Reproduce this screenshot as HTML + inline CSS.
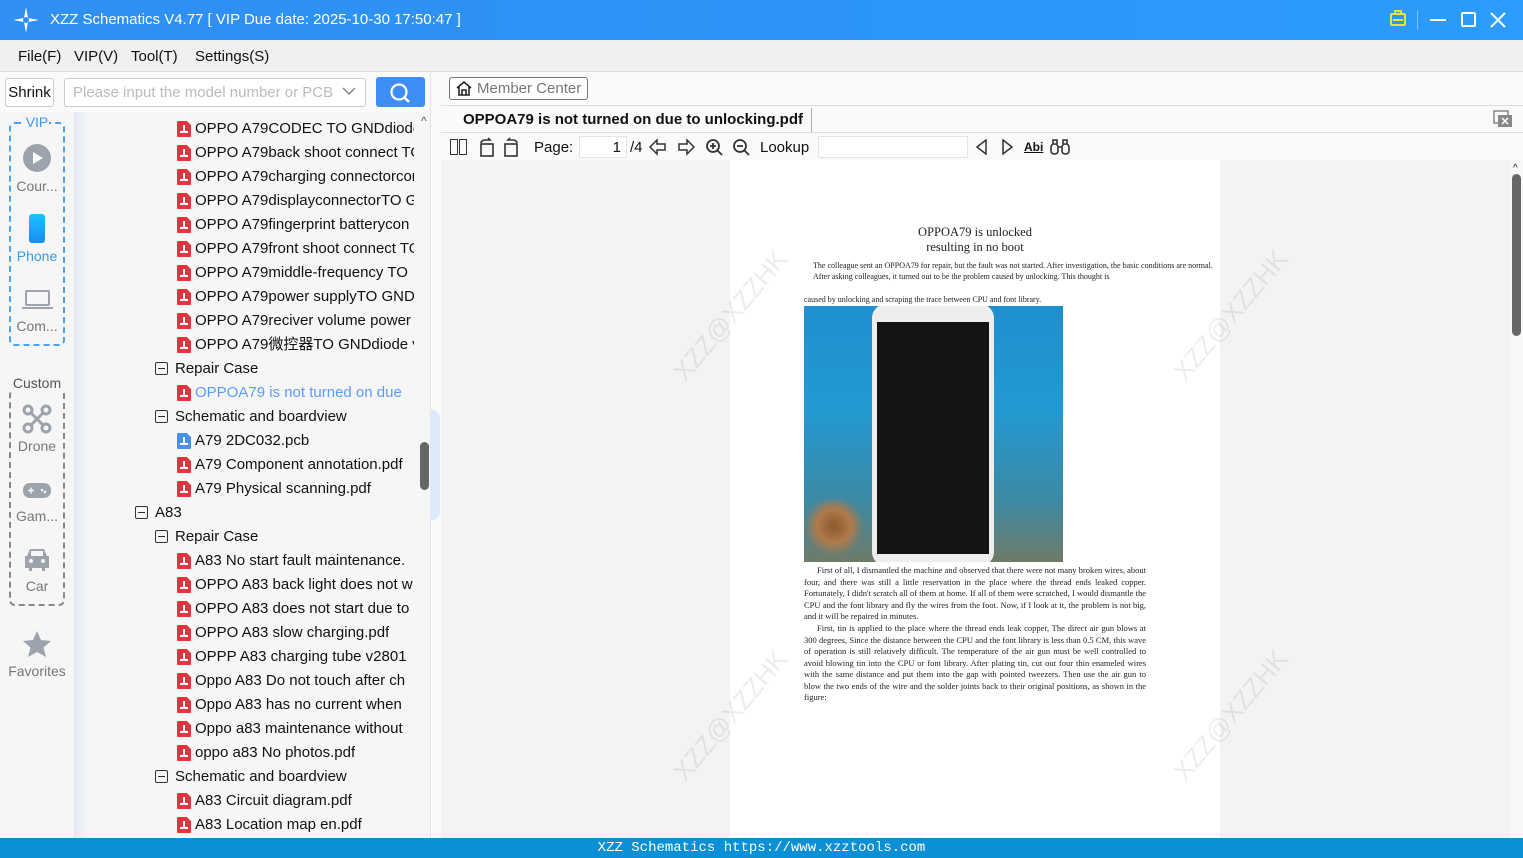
<!DOCTYPE html>
<html><head><meta charset="utf-8"><style>
*{margin:0;padding:0;box-sizing:border-box}
body{width:1523px;height:858px;overflow:hidden;position:relative;font-family:"Liberation Sans","Noto Sans CJK SC",sans-serif;background:#f0f0f0;color:#111}
.a{position:absolute}
.title{left:0;top:0;width:1523px;height:40px;background:linear-gradient(90deg,#2f8ff2,#2c95f8 60%,#2b9cfb);color:#fff;font-size:15px}
.menu{left:0;top:40px;width:1523px;height:32px;background:#f0f0f0;border-bottom:1px solid #ddd;font-size:15px}
.menu span{position:absolute;top:8px}
.tree{left:74px;top:112px;width:356px;height:726px;background:linear-gradient(90deg,#e3e9f2,#f6f6f6 14px,#f6f6f6)}
.row{position:absolute;font-size:15px;white-space:nowrap;height:22px;line-height:22px;overflow:hidden}
.pdf{position:absolute;width:14px;height:16px;background:#d9363e;border-radius:1px;clip-path:polygon(0 0,70% 0,100% 25%,100% 100%,0 100%)}
.pdf:before{content:"";position:absolute;left:6px;top:4px;width:2px;height:7px;background:#fff}
.pdf:after{content:"";position:absolute;left:3px;top:10px;width:8px;height:2px;background:#fff}
.box{position:absolute;width:13px;height:13px;border:1px solid #333;border-radius:2px}
.box:after{content:"";position:absolute;left:2px;top:5px;width:7px;height:1px;background:#333}
.side{font-size:14px;color:#777;text-align:center;width:74px;left:0}
.pdfarea{left:441px;top:160px;width:1069px;height:678px;background:#f3f3f3}
.page{left:730px;top:160px;width:490px;height:678px;background:#fff;font-family:"Liberation Serif",serif;color:#222}
.p{position:absolute;font-size:8.5px;line-height:11.5px;text-align:justify;left:74px;width:342px}
.wm{position:absolute;color:rgba(0,0,0,0.07);font-size:26px;transform:rotate(-50deg);white-space:nowrap}
</style></head><body>
<div class="a title">
<svg class="a" style="left:12px;top:6px" width="28" height="28" viewBox="0 0 28 28"><path d="M14 1 L16 12 L27 14 L16 16 L14 27 L12 16 L1 14 L12 12Z" fill="#fff"/><circle cx="14" cy="14" r="3" fill="#2f8ff2"/></svg>
<span class="a" style="left:50px;top:11px">XZZ Schematics V4.77 [ VIP Due date: 2025-10-30 17:50:47 ]</span>
<div class="a" style="left:1390px;top:13px;width:16px;height:13px;border:2px solid #e4e43a;border-radius:2px"></div>
<div class="a" style="left:1394px;top:10px;width:8px;height:4px;border:2px solid #e4e43a;border-bottom:none"></div>
<div class="a" style="left:1393px;top:19px;width:10px;height:1.5px;background:#e4e43a"></div>
<div class="a" style="left:1417px;top:10px;width:1px;height:20px;background:rgba(255,255,255,.4)"></div>
<div class="a" style="left:1430px;top:19px;width:16px;height:2px;background:#fff"></div>
<div class="a" style="left:1461px;top:12px;width:15px;height:15px;border:2px solid #fff;border-radius:2px"></div>
<svg class="a" style="left:1490px;top:12px" width="16" height="16"><path d="M1 1L15 15M15 1L1 15" stroke="#fff" stroke-width="2"/></svg>
</div>
<div class="a menu"><span style="left:18px">File(F)</span><span style="left:74px">VIP(V)</span><span style="left:131px">Tool(T)</span><span style="left:195px">Settings(S)</span></div>
<div class="a" style="left:0;top:72px;width:440px;height:40px;background:#fafafa"></div>
<div class="a" style="left:5px;top:78px;width:49px;height:29px;border:1px solid #ccc;border-radius:3px;background:#fff;font-size:15px;line-height:27px;text-align:center">Shrink</div>
<div class="a" style="left:64px;top:78px;width:302px;height:29px;border:1px solid #ccc;border-radius:3px;background:#fff;font-size:15px;line-height:27px;color:#bbb;padding-left:8px">Please input the model number or PCB</div>
<svg class="a" style="left:342px;top:86px" width="14" height="10"><path d="M1 2L7 8L13 2" stroke="#888" stroke-width="1.5" fill="none"/></svg>
<div class="a" style="left:376px;top:77px;width:49px;height:30px;background:#3d8ef5;border-radius:3px"></div>
<svg class="a" style="left:389px;top:82px" width="22" height="22"><circle cx="10" cy="10" r="7.5" stroke="#fff" stroke-width="2.2" fill="none"/><path d="M15.5 15.5L20 20" stroke="#fff" stroke-width="2.4"/></svg>
<div class="a" style="left:0;top:112px;width:74px;height:726px;background:#f6f6f6"></div>
<div class="a" style="left:9px;top:122px;width:56px;height:224px;border:2px dashed #4aa3f0;border-radius:6px"></div>
<div class="a side" style="top:114px;color:#3a9af0;"><span style="background:#f6f6f6;padding:0 1px">VIP</span></div>
<div class="a" style="left:23px;top:144px;width:28px;height:28px;border-radius:50%;background:#9ca3ad"></div>
<svg class="a" style="left:32px;top:151px" width="12" height="14"><path d="M1 1L11 7L1 13Z" fill="#fff"/></svg>
<div class="a side" style="top:178px">Cour...</div>
<div class="a" style="left:29px;top:214px;width:16px;height:29px;border-radius:3px;background:linear-gradient(#1ec1ff,#1a8df0)"></div>
<div class="a side" style="top:248px;color:#3a9af0">Phone</div>
<div class="a" style="left:25px;top:290px;width:25px;height:16px;border:2px solid #9ca3ad;border-radius:2px"></div>
<div class="a" style="left:22px;top:307px;width:31px;height:2px;background:#9ca3ad"></div>
<div class="a side" style="top:318px">Com...</div>
<div class="a" style="left:9px;top:389px;width:56px;height:217px;border:2px dashed #888;border-radius:6px"></div>
<div class="a side" style="top:375px;color:#555"><span style="background:#f6f6f6">Custom</span></div>
<svg class="a" style="left:22px;top:404px" width="30" height="30"><g fill="none" stroke="#9ca3ad" stroke-width="3"><circle cx="6" cy="6" r="4"/><circle cx="24" cy="6" r="4"/><circle cx="6" cy="24" r="4"/><circle cx="24" cy="24" r="4"/><path d="M8 8L22 22M22 8L8 22"/></g></svg>
<div class="a side" style="top:438px">Drone</div>
<svg class="a" style="left:23px;top:483px" width="28" height="15"><rect x="0" y="0" width="28" height="15" rx="7" fill="#9ca3ad"/><path d="M5 7.5H11M8 4.5V10.5" stroke="#f6f6f6" stroke-width="1.5"/><circle cx="19" cy="7" r="1.3" fill="#f6f6f6"/><circle cx="22" cy="9" r="1.3" fill="#f6f6f6"/></svg>
<div class="a side" style="top:508px">Gam...</div>
<svg class="a" style="left:23px;top:546px" width="28" height="26"><path d="M4 10L7 3H21L24 10H26V22H22V25H19V22H9V25H6V22H2V10Z" fill="#9ca3ad"/><rect x="8" y="5" width="12" height="5" fill="#f6f6f6"/><circle cx="8" cy="15" r="2" fill="#f6f6f6"/><circle cx="20" cy="15" r="2" fill="#f6f6f6"/></svg>
<div class="a side" style="top:578px">Car</div>
<svg class="a" style="left:22px;top:630px" width="30" height="28"><path d="M15 1L19 10L29 11L21.5 17.5L24 27L15 22L6 27L8.5 17.5L1 11L11 10Z" fill="#9ca3ad"/></svg>
<div class="a side" style="top:663px">Favorites</div>
<div class="a tree">
<div class="a" style="left:347px;top:2px;font-size:12px;color:#555">^</div>
<div class="a" style="left:346px;top:330px;width:9px;height:48px;border-radius:5px;background:#666"></div>
<div class="a" style="left:0;top:1px;width:340px;height:726px;overflow:hidden">
<div class="pdf" style="left:103px;top:8px"></div><div class="row" style="left:121px;top:5px">OPPO A79CODEC TO GNDdiode</div>
<div class="pdf" style="left:103px;top:32px"></div><div class="row" style="left:121px;top:29px">OPPO A79back shoot connect TO</div>
<div class="pdf" style="left:103px;top:56px"></div><div class="row" style="left:121px;top:53px">OPPO A79charging connectorcon</div>
<div class="pdf" style="left:103px;top:80px"></div><div class="row" style="left:121px;top:77px">OPPO A79displayconnectorTO GN</div>
<div class="pdf" style="left:103px;top:104px"></div><div class="row" style="left:121px;top:101px">OPPO A79fingerprint batterycon</div>
<div class="pdf" style="left:103px;top:128px"></div><div class="row" style="left:121px;top:125px">OPPO A79front shoot connect TO</div>
<div class="pdf" style="left:103px;top:152px"></div><div class="row" style="left:121px;top:149px">OPPO A79middle-frequency TO</div>
<div class="pdf" style="left:103px;top:176px"></div><div class="row" style="left:121px;top:173px">OPPO A79power supplyTO GND</div>
<div class="pdf" style="left:103px;top:200px"></div><div class="row" style="left:121px;top:197px">OPPO A79reciver volume power</div>
<div class="pdf" style="left:103px;top:224px"></div><div class="row" style="left:121px;top:221px">OPPO A79微控器TO GNDdiode v</div>
<div class="box" style="left:81px;top:249px"></div><div class="row" style="left:101px;top:245px">Repair Case</div>
<div class="pdf" style="left:103px;top:272px"></div><div class="row" style="left:121px;top:269px;color:#5b9cf5">OPPOA79 is not turned on due</div>
<div class="box" style="left:81px;top:297px"></div><div class="row" style="left:101px;top:293px">Schematic and boardview</div>
<div class="pdf" style="left:103px;top:320px;background:#4a90e8"></div><div class="row" style="left:121px;top:317px">A79 2DC032.pcb</div>
<div class="pdf" style="left:103px;top:344px"></div><div class="row" style="left:121px;top:341px">A79 Component annotation.pdf</div>
<div class="pdf" style="left:103px;top:368px"></div><div class="row" style="left:121px;top:365px">A79 Physical scanning.pdf</div>
<div class="box" style="left:61px;top:393px"></div><div class="row" style="left:81px;top:389px">A83</div>
<div class="box" style="left:81px;top:417px"></div><div class="row" style="left:101px;top:413px">Repair Case</div>
<div class="pdf" style="left:103px;top:440px"></div><div class="row" style="left:121px;top:437px">A83 No start fault maintenance.</div>
<div class="pdf" style="left:103px;top:464px"></div><div class="row" style="left:121px;top:461px">OPPO A83 back light does not w</div>
<div class="pdf" style="left:103px;top:488px"></div><div class="row" style="left:121px;top:485px">OPPO A83 does not start due to</div>
<div class="pdf" style="left:103px;top:512px"></div><div class="row" style="left:121px;top:509px">OPPO A83 slow charging.pdf</div>
<div class="pdf" style="left:103px;top:536px"></div><div class="row" style="left:121px;top:533px">OPPP A83 charging tube v2801</div>
<div class="pdf" style="left:103px;top:560px"></div><div class="row" style="left:121px;top:557px">Oppo A83 Do not touch after ch</div>
<div class="pdf" style="left:103px;top:584px"></div><div class="row" style="left:121px;top:581px">Oppo A83 has no current when</div>
<div class="pdf" style="left:103px;top:608px"></div><div class="row" style="left:121px;top:605px">Oppo a83 maintenance without</div>
<div class="pdf" style="left:103px;top:632px"></div><div class="row" style="left:121px;top:629px">oppo a83 No photos.pdf</div>
<div class="box" style="left:81px;top:657px"></div><div class="row" style="left:101px;top:653px">Schematic and boardview</div>
<div class="pdf" style="left:103px;top:680px"></div><div class="row" style="left:121px;top:677px">A83 Circuit diagram.pdf</div>
<div class="pdf" style="left:103px;top:704px"></div><div class="row" style="left:121px;top:701px">A83 Location map en.pdf</div>
</div></div>
<div class="a" style="left:430px;top:72px;width:11px;height:766px;background:#fafafa;border-left:1px solid #e4e4e4"></div>
<div class="a" style="left:430px;top:410px;width:10px;height:110px;background:#dcebfb;border-radius:0 8px 8px 0"></div>
<div class="a" style="left:441px;top:72px;width:1082px;height:88px;background:#fafafa"></div>
<div class="a" style="left:441px;top:105px;width:1082px;height:1px;background:#ddd"></div>
<div class="a" style="left:441px;top:132px;width:1082px;height:1px;background:#ddd"></div>
<div class="a" style="left:449px;top:77px;width:139px;height:23px;border:1px solid #777;border-radius:3px;background:#fff;font-size:15px;line-height:21px;color:#777;padding-left:27px">Member Center</div>
<svg class="a" style="left:455px;top:80px" width="18" height="17"><path d="M2 8L9 2L16 8M4 7V15H14V7M7 15V10H11V15" stroke="#222" stroke-width="1.6" fill="none"/></svg>
<div class="a" style="left:463px;top:111px;font-size:15px;font-weight:bold">OPPOA79 is not turned on due to unlocking.pdf</div>
<div class="a" style="left:811px;top:108px;width:1px;height:24px;background:#aaa"></div>
<svg class="a" style="left:1493px;top:110px" width="20" height="18"><rect x="1" y="1" width="14" height="12" fill="none" stroke="#888" stroke-width="1.5"/><rect x="5" y="5" width="14" height="12" fill="#888"/><path d="M9 8L15 14M15 8L9 14" stroke="#fff" stroke-width="1.5"/></svg>
<div class="a" style="left:450px;top:139px;width:8px;height:16px;border:1.5px solid #333"></div>
<div class="a" style="left:459px;top:139px;width:8px;height:16px;border:1.5px solid #333"></div>
<svg class="a" style="left:478px;top:137px" width="42" height="20"><g stroke="#333" stroke-width="1.6" fill="none"><rect x="3" y="7" width="12" height="12"/><path d="M6 3H12L10 1M6 3Q3 4 3 6"/><rect x="27" y="7" width="12" height="12"/><path d="M36 3H30L32 1M36 3Q39 4 39 6"/></g></svg>
<div class="a" style="left:534px;top:139px;font-size:15px">Page:</div>
<div class="a" style="left:579px;top:136px;width:48px;height:22px;border:1px solid #e4e4e4;background:#fff;font-size:15px;text-align:right;padding-right:5px;line-height:21px">1</div>
<div class="a" style="left:630px;top:139px;font-size:15px">/4</div>
<svg class="a" style="left:648px;top:138px" width="48" height="18"><g stroke="#333" stroke-width="1.5" fill="none"><path d="M2 9L9 2V6H17V12H9V16Z"/><path d="M46 9L39 2V6H31V12H39V16Z"/></g></svg>
<svg class="a" style="left:705px;top:138px" width="48" height="18"><g stroke="#333" stroke-width="1.8" fill="none"><circle cx="8" cy="8" r="6"/><path d="M12.5 12.5L17 17M5 8H11M8 5V11"/><circle cx="35" cy="8" r="6"/><path d="M39.5 12.5L44 17M32 8H38"/></g></svg>
<div class="a" style="left:760px;top:139px;font-size:15px">Lookup</div>
<div class="a" style="left:818px;top:136px;width:150px;height:22px;border:1px solid #e4e4e4;background:#fff"></div>
<svg class="a" style="left:974px;top:139px" width="42" height="16"><g stroke="#333" stroke-width="1.5" fill="none"><path d="M12 1L3 8L12 15Z"/><path d="M29 1L38 8L29 15Z"/></g></svg>
<div class="a" style="left:1024px;top:140px;font-size:12px;font-weight:bold;text-decoration:underline">Abi</div>
<svg class="a" style="left:1050px;top:138px" width="20" height="18"><g stroke="#333" stroke-width="1.6" fill="none"><rect x="1" y="6" width="7" height="10" rx="3"/><rect x="12" y="6" width="7" height="10" rx="3"/><path d="M3 6V2H7V6M13 6V2H17V6M8 9H12"/></g></svg>
<div class="a pdfarea"></div>
<div class="a" style="left:1510px;top:160px;width:13px;height:678px;background:#f8f8f8"></div>
<div class="a" style="left:1512px;top:174px;width:9px;height:162px;border-radius:5px;background:#666"></div>
<div class="a" style="left:1513px;top:163px;font-size:10px">^</div>
<div class="a page">
<div style="position:absolute;left:0;top:65px;width:490px;text-align:center;font-size:12.5px;line-height:15px">OPPOA79 is unlocked<br>resulting in no boot</div>
<div class="p" style="top:101px;width:406px;font-size:8px;line-height:10.5px;left:83px;text-align:left;margin-left:0">The colleague sent an OPPOA79 for repair, but the fault was not started. After investigation, the basic conditions are normal.<br>After asking colleagues, it turned out to be the problem caused by unlocking. This thought is</div>
<div class="p" style="top:134px;width:420px;font-size:8px;text-align:left">caused by unlocking and scraping the trace between CPU and font library.</div>
<div style="position:absolute;left:74px;top:146px;width:259px;height:256px;background:linear-gradient(180deg,#1f8fcf,#2399d2 40%,#3b8aa6 75%,#6f7b68);overflow:hidden">
<div style="position:absolute;left:0;top:190px;width:60px;height:60px;background:radial-gradient(#8a5a32,#b07a4a 40%,transparent 70%)"></div>
<div style="position:absolute;left:68px;top:-2px;width:122px;height:262px;border-radius:14px;background:#eee"></div>
<div style="position:absolute;left:73px;top:16px;width:112px;height:232px;background:#141414"></div>
</div>
<div class="p" style="top:405px;text-indent:13px">First of all, I dismantled the machine and observed that there were not many broken wires, about four, and there was still a little reservation in the place where the thread ends leaked copper. Fortunately, I didn't scratch all of them at home. If all of them were scratched, I would dismantle the CPU and the font library and fly the wires from the foot. Now, if I look at it, the problem is not big, and it will be repaired in minutes.</div>
<div class="p" style="top:463px;text-indent:13px">First, tin is applied to the place where the thread ends leak copper, The direct air gun blows at 300 degrees, Since the distance between the CPU and the font library is less than 0.5 CM, this wave of operation is still relatively difficult. The temperature of the air gun must be well controlled to avoid blowing tin into the CPU or font library. After plating tin, cut out four thin enameled wires with the same distance and put them into the gap with pointed tweezers. Then use the air gun to blow the two ends of the wire and the solder joints back to their original positions, as shown in the figure:</div>
</div>
<div class="wm" style="left:650px;top:300px">XZZ@XZZHK</div>
<div class="wm" style="left:1150px;top:300px">XZZ@XZZHK</div>
<div class="wm" style="left:650px;top:700px">XZZ@XZZHK</div>
<div class="wm" style="left:1150px;top:700px">XZZ@XZZHK</div>
<div class="a" style="left:0;top:838px;width:1523px;height:20px;background:#0b8fd6;color:#fff;font-family:'Liberation Mono',monospace;font-size:14px;text-align:center;line-height:20px">XZZ Schematics https://www.xzztools.com</div>
</body></html>
